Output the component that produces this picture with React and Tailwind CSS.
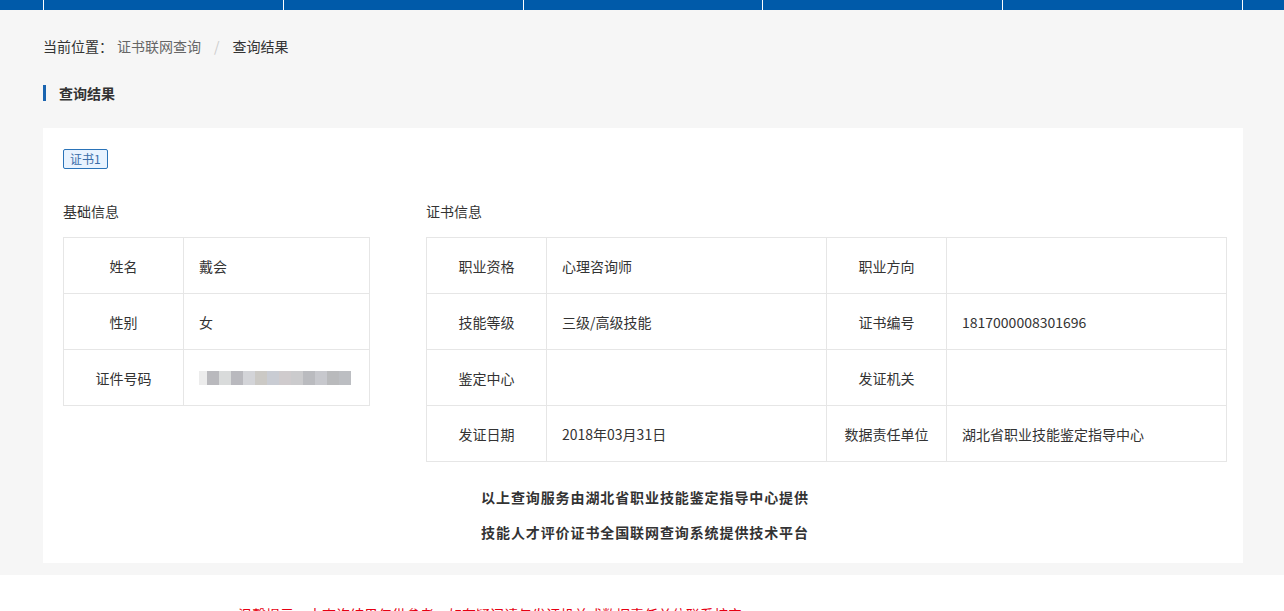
import React from "react";

const navItems = ["", "", "", "", ""];

const basicRows = [
  ["姓名", "戴会"],
  ["性别", "女"],
  ["证件号码", null],
];

const certRows = [
  ["职业资格", "心理咨询师", "职业方向", ""],
  ["技能等级", "三级/高级技能", "证书编号", "1817000008301696"],
  ["鉴定中心", "", "发证机关", ""],
  ["发证日期", "2018年03月31日", "数据责任单位", "湖北省职业技能鉴定指导中心"],
];

const blurShades = [
  "bg-[#ececec]",
  "bg-[#b9b9bd]",
  "bg-[#d9dbdb]",
  "bg-[#b9b9be]",
  "bg-[#d3d4d8]",
  "bg-[#cbc9c5]",
  "bg-[#c9ccd3]",
  "bg-[#cfcbcd]",
  "bg-[#cbcbcd]",
  "bg-[#babbbf]",
  "bg-[#c7c8cd]",
  "bg-[#b9babc]",
  "bg-[#bcbec2]",
];

const BlurredId = () => (
  <div className="flex h-[14px]">
    {blurShades.map((c, i) => (
      <div key={i} className={`${c} ${i === 0 ? "w-[8px]" : "w-[12px]"} h-full`} />
    ))}
  </div>
);

const App = () => {
  return (
    <div
      className="min-h-[611px] bg-white text-[#333] text-sm"
      style={{ fontFamily: '"Noto Sans CJK SC", "Noto Sans", sans-serif' }}
    >
      {/* top nav strip */}
      <div className="bg-[#005aa9] h-[10px]">
        <div className="w-[1200px] ml-[43px] flex h-full border-r border-white">
          {navItems.map((_, i) => (
            <div key={i} className="flex-1 border-l border-white" />
          ))}
        </div>
      </div>

      <div className="bg-[#f6f6f6] pb-3">
        <div className="w-[1200px] ml-[43px]">
          {/* breadcrumb */}
          <div className="pt-[26px] leading-5 flex items-center">
            <span className="text-[#333]">当前位置：</span>
            <span className="text-[#666] ml-1">证书联网查询</span>
            <span className="text-[#ccc] mx-[13px]">/</span>
            <span className="text-[#333]">查询结果</span>
          </div>

          {/* section title */}
          <div className="mt-[27px] flex items-center h-5">
            <div className="w-[3px] h-4 bg-[#1a64b0]" />
            <span className="ml-[13px] font-bold">查询结果</span>
          </div>

          {/* card */}
          <div className="mt-[25px] bg-white pl-5 pr-4 pt-5 pb-[13px]">
            <div className="inline-flex items-center h-5 px-[6px] border border-[#2a73b8] bg-[#e8f3ff] text-[#3a6da8] text-xs rounded-[2px]">
              证书1
            </div>

            <div className="flex mt-[32px] gap-[56px]">
              {/* basic info */}
              <div className="w-[307px]">
                <div className="leading-5">基础信息</div>
                <table className="mt-4 w-full border-collapse">
                  <tbody>
                    {basicRows.map(([k, v]) => (
                      <tr key={k} className="h-[56px]">
                        <td className="w-[120px] border border-[#e6e6e6] text-center">{k}</td>
                        <td className="border border-[#e6e6e6] pl-[15px]">
                          {v === null ? <BlurredId /> : v}
                        </td>
                      </tr>
                    ))}
                  </tbody>
                </table>
              </div>

              {/* certificate info */}
              <div className="w-[801px]">
                <div className="leading-5">证书信息</div>
                <table className="mt-4 w-full border-collapse">
                  <tbody>
                    {certRows.map(([k1, v1, k2, v2]) => (
                      <tr key={k1} className="h-[56px]">
                        <td className="w-[120px] border border-[#e6e6e6] text-center">{k1}</td>
                        <td className="w-[280px] border border-[#e6e6e6] pl-[15px]">{v1}</td>
                        <td className="w-[120px] border border-[#e6e6e6] text-center">{k2}</td>
                        <td className="border border-[#e6e6e6] pl-[15px]">{v2}</td>
                      </tr>
                    ))}
                  </tbody>
                </table>
              </div>
            </div>

            <div className="mt-[18px] text-center font-bold leading-[35px] tracking-[0.9px]">
              <div>以上查询服务由湖北省职业技能鉴定指导中心提供</div>
              <div>技能人才评价证书全国联网查询系统提供技术平台</div>
            </div>
          </div>
        </div>
      </div>

      {/* bottom notice (cut off by the viewport) */}
      <div className="pt-[29px] pl-[238px] leading-5 text-[#e60012]">
        温馨提示：本查询结果仅供参考，如有疑问请与发证机关或数据责任单位联系核实。
      </div>
    </div>
  );
};

export default App;
